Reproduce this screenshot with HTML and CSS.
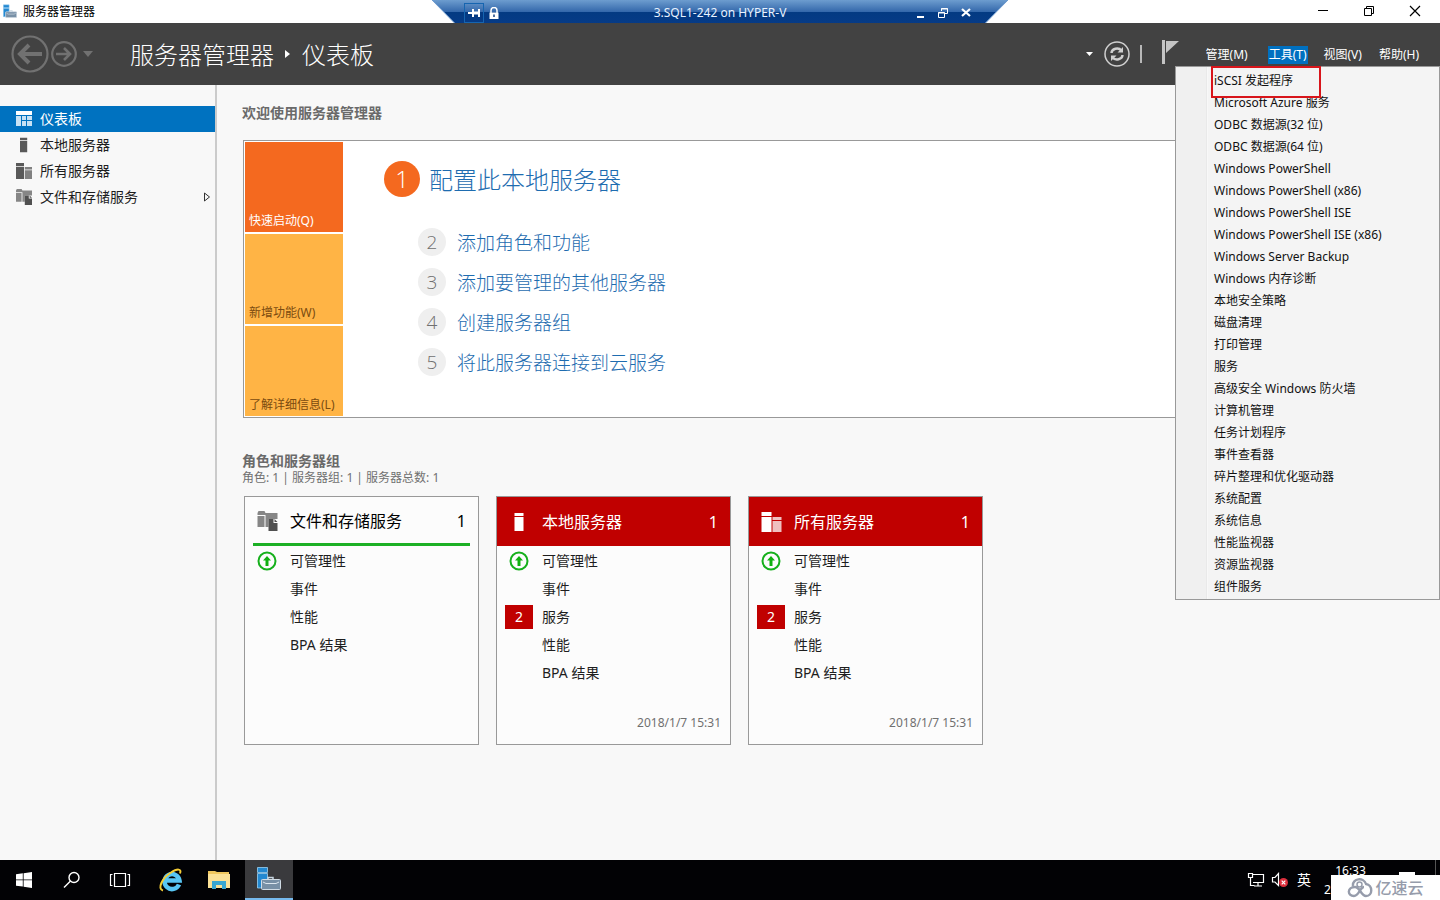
FILE: index.html
```html
<!DOCTYPE html>
<html lang="zh-CN">
<head>
<meta charset="utf-8">
<title>服务器管理器</title>
<link rel="stylesheet" href="styles.css">
</head>
<body>
<svg class="defs" aria-hidden="true">
  <symbol id="i-server" viewBox="0 0 20 20"><path d="M5 1h9v3H5zM5 5h9v14H5z" fill="currentColor"/></symbol>
  <symbol id="i-servers" viewBox="0 0 20 20"><path d="M0 0h10v4H0zM0 5h10v15H0z" fill="currentColor"/><path d="M11 5h9v3h-9zM11 9h9v11h-9z" fill="currentColor" opacity=".75"/></symbol>
  <symbol id="i-files" viewBox="0 0 20 20"><path d="M0 2l1-2h6l1 2h12v6h-9v8H8V4H0zM0 5h7v11H0z" fill="#868686"/><path d="M11 8h5v4h4v8h-9z" fill="#505050"/><path d="M17 8l3 3h-3z" fill="#505050"/></symbol>
  <symbol id="i-up" viewBox="0 0 20 20"><circle cx="10" cy="10" r="8.500" fill="none" stroke="#16b01c" stroke-width="2"/><path d="M10 5l4 4.500h-2.500V15h-3V9.500H6z" fill="#10b010"/></symbol>
  <symbol id="i-manager" viewBox="0 0 24 26"><path d="M.5 1.500h10v5H.5zM.5 7.500h10v6.500H4.500v8h-4z" fill="#2388d0" stroke="#9ad0f4" stroke-width=".8"/><path d="M11 13.500v-2h5v2" fill="none" stroke="#c6d4df" stroke-width="1.500"/><rect x="4.500" y="13.500" width="19" height="10" rx="1" fill="#7890a6" stroke="#d0dbe4"/><path d="M6 16l3 1.500h10l3-1.500" fill="none" stroke="#dce6ee"/></symbol>
</svg>

<div class="titlebar">
  <svg class="app-icon"><use href="#i-manager"/></svg>
  <span class="app-name">服务器管理器</span>
  <div class="window-controls">
    <button aria-label="最小化"><svg viewBox="0 0 12 12"><path d="M1 5.500h10" stroke="#000"/></svg></button>
    <button aria-label="还原"><svg viewBox="0 0 12 12" fill="none" stroke="#000"><path d="M1.500 3.500h7v7h-7zM3.500 3V1.500h7v7H9"/></svg></button>
    <button aria-label="关闭"><svg viewBox="0 0 12 12"><path d="M1 1l10 10M11 1L1 11" stroke="#000" stroke-width="1.200"/></svg></button>
  </div>
</div>

<div class="connection">
  <svg class="connection-shape" viewBox="0 0 576 26" preserveAspectRatio="none">
    <defs><linearGradient id="bar" x2="0" y2="1"><stop offset="0" stop-color="#6d9dcf"/><stop offset=".46" stop-color="#3468ab"/><stop offset=".47" stop-color="#033a82"/><stop offset="1" stop-color="#063b88"/></linearGradient></defs>
    <path d="M0 0h576l-25 25.500H25z" fill="url(#bar)"/><path d="M0 0l25 25.500h526L576 0" fill="none" stroke="#6f9bce"/>
  </svg>
  <div class="connection-content">
    <div class="connection-side">
      <button class="pin" aria-label="固定"><svg viewBox="0 0 12 12"><path d="M0 6h5M5 2v8M11 2v8" stroke="#fff" stroke-width="2"/><path d="M6 6h5" stroke="#fff" stroke-width="3"/></svg></button>
      <button aria-label="连接安全"><svg viewBox="0 0 12 12"><path d="M3 6V3.500a3 3 0 016 0V6" fill="none" stroke="#fff" stroke-width="1.500"/><path d="M1.500 5.500h9V12h-9z" fill="#fff"/><path d="M6 7.500v2.500" stroke="#123f80" stroke-width="1.500"/></svg></button>
    </div>
    <span>3.SQL1-242 on HYPER-V</span>
    <div class="connection-side end">
      <button aria-label="最小化会话"><svg viewBox="0 0 12 12"><path d="M3 10h7" stroke="#fff" stroke-width="2"/></svg></button>
      <button aria-label="还原会话"><svg viewBox="0 0 12 12" fill="none" stroke="#fff"><path d="M1.500 5.500h6v5h-6zM1 6h7M4.500 4V1.500h6v5H8M4 2h7"/></svg></button>
      <button aria-label="关闭会话"><svg viewBox="0 0 12 12"><path d="M2 2l8 7M10 2l-8 7" stroke="#fff" stroke-width="2.200"/></svg></button>
    </div>
  </div>
</div>

<header class="header">
  <div class="history">
    <button aria-label="后退"><svg width="38" height="38" viewBox="0 0 38 38" fill="none" stroke="#717171"><circle cx="19" cy="19" r="17.500" stroke-width="2.200"/><path d="M31 19H9M18 10l-9 9 9 9" stroke-width="4"/></svg></button>
    <button aria-label="前进"><svg width="26" height="26" viewBox="0 0 26 26" fill="none" stroke="#717171"><circle cx="13" cy="13" r="11.800" stroke-width="2.200"/><path d="M5 13h14M13 7l6 6-6 6" stroke-width="2.600"/></svg></button>
    <button aria-label="历史记录"><svg width="12" height="8"><path d="M1 1h10L6 7z" fill="#717171"/></svg></button>
  </div>
  <h1 class="breadcrumb"><span>服务器管理器</span><svg width="6" height="10"><path d="M0 1l5 4-5 4z" fill="#fff"/></svg><span>仪表板</span></h1>
  <div class="header-tools">
    <button aria-label="通知列表"><svg width="8" height="6"><path d="M0 1h7L3.500 5z" fill="#fff"/></svg></button>
    <button aria-label="刷新"><svg width="26" height="26" viewBox="0 0 26 26" fill="none" stroke="#d0d0d0"><circle cx="13" cy="13" r="12" stroke-width="1.500"/><path d="M7.500 12a5.500 4.500 0 0110-2.500M18.500 14a5.500 4.500 0 01-10 2.500" stroke-width="2.400"/><path d="M19 6v5.500h-5.500zM7 20v-5.500h5.500z" fill="#d0d0d0" stroke="none"/></svg></button>
    <i class="divider"></i>
    <button class="flag" aria-label="通知"><svg width="18" height="26"><path d="M0 1h3v24H0zM4 2h13L4 14z" fill="#c4c4c4"/></svg></button>
  </div>
  <nav class="menubar">
    <button>管理(M)</button><button class="open" aria-expanded="true">工具(T)</button><button>视图(V)</button><button>帮助(H)</button>
  </nav>
  <div class="menu" role="menu">
    <button class="marked" role="menuitem">iSCSI 发起程序</button>
    <button role="menuitem">Microsoft Azure 服务</button>
    <button role="menuitem">ODBC 数据源(32 位)</button>
    <button role="menuitem">ODBC 数据源(64 位)</button>
    <button role="menuitem">Windows PowerShell</button>
    <button role="menuitem">Windows PowerShell (x86)</button>
    <button role="menuitem">Windows PowerShell ISE</button>
    <button role="menuitem">Windows PowerShell ISE (x86)</button>
    <button role="menuitem">Windows Server Backup</button>
    <button role="menuitem">Windows 内存诊断</button>
    <button role="menuitem">本地安全策略</button>
    <button role="menuitem">磁盘清理</button>
    <button role="menuitem">打印管理</button>
    <button role="menuitem">服务</button>
    <button role="menuitem">高级安全 Windows 防火墙</button>
    <button role="menuitem">计算机管理</button>
    <button role="menuitem">任务计划程序</button>
    <button role="menuitem">事件查看器</button>
    <button role="menuitem">碎片整理和优化驱动器</button>
    <button role="menuitem">系统配置</button>
    <button role="menuitem">系统信息</button>
    <button role="menuitem">性能监视器</button>
    <button role="menuitem">资源监视器</button>
    <button role="menuitem">组件服务</button>
  </div>
</header>

<div class="workspace">
  <nav class="sidebar">
    <a href="#dashboard" class="active"><svg viewBox="0 0 16 16"><path d="M0 0h16v4H0z" fill="#fff"/><path d="M0 5h5v10H0zM6 5h4v4H6zM11 5h5v4h-5zM6 10h4v5H6zM11 10h5v5h-5z" fill="#c8e2f4"/></svg>仪表板</a>
    <a href="#local"><svg><use href="#i-server"/></svg>本地服务器</a>
    <a href="#all"><svg><use href="#i-servers"/></svg>所有服务器</a>
    <a href="#files"><svg><use href="#i-files"/></svg>文件和存储服务<svg class="expand" viewBox="0 0 8 10"><path d="M1.500 1l5 4-5 4z" fill="none" stroke="#333"/></svg></a>
  </nav>
  <main class="main">
    <h2 class="section-title">欢迎使用服务器管理器</h2>
    <section class="welcome">
      <div class="tabs">
        <button class="current">快速启动(Q)</button>
        <button>新增功能(W)</button>
        <button>了解详细信息(L)</button>
      </div>
      <div class="steps">
        <a class="primary" href="#s1"><b>1</b>配置此本地服务器</a>
        <a href="#s2"><b>2</b>添加角色和功能</a>
        <a href="#s3"><b>3</b>添加要管理的其他服务器</a>
        <a href="#s4"><b>4</b>创建服务器组</a>
        <a href="#s5"><b>5</b>将此服务器连接到云服务</a>
      </div>
    </section>
    <h2 class="section-title groups">角色和服务器组</h2>
    <p class="summary">角色: 1 | 服务器组: 1 | 服务器总数: 1</p>
    <div class="cards">
      <article class="card ok">
        <h3><svg><use href="#i-files"/></svg><span>文件和存储服务</span><span>1</span></h3>
        <ul>
          <li><span class="state"><svg><use href="#i-up"/></svg></span>可管理性</li>
          <li><span class="state"></span>事件</li>
          <li><span class="state"></span>性能</li>
          <li><span class="state"></span>BPA 结果</li>
        </ul>
      </article>
      <article class="card alert">
        <h3><svg><use href="#i-server"/></svg><span>本地服务器</span><span>1</span></h3>
        <ul>
          <li><span class="state"><svg><use href="#i-up"/></svg></span>可管理性</li>
          <li><span class="state"></span>事件</li>
          <li><span class="state count">2</span>服务</li>
          <li><span class="state"></span>性能</li>
          <li><span class="state"></span>BPA 结果</li>
        </ul>
        <time>2018/1/7 15:31</time>
      </article>
      <article class="card alert">
        <h3><svg><use href="#i-servers"/></svg><span>所有服务器</span><span>1</span></h3>
        <ul>
          <li><span class="state"><svg><use href="#i-up"/></svg></span>可管理性</li>
          <li><span class="state"></span>事件</li>
          <li><span class="state count">2</span>服务</li>
          <li><span class="state"></span>性能</li>
          <li><span class="state"></span>BPA 结果</li>
        </ul>
        <time>2018/1/7 15:31</time>
      </article>
    </div>
  </main>
</div>

<footer class="taskbar">
  <div class="apps">
    <button aria-label="开始"><svg width="16" height="16" viewBox="0 0 16 16"><path d="M0 2.300L6.800 1.300v6.200H0zM7.600 1.200L16 0v7.500H7.600zM0 8.300h6.800v6.300L0 13.700zM7.600 8.300H16V16l-8.400-1.300z" fill="#fff"/></svg></button>
    <button aria-label="搜索"><svg width="18" height="18" viewBox="0 0 18 18" fill="none" stroke="#fff" stroke-width="1.400"><circle cx="11" cy="6.500" r="5"/><path d="M7.500 10L1 16.500"/></svg></button>
    <button aria-label="任务视图"><svg width="22" height="16" viewBox="0 0 22 16" fill="none" stroke="#fff" stroke-width="1.200"><path d="M5.500 1.500h11v13h-11zM3.500 2.500h-2v11h2M18.500 2.500h2v11h-2"/></svg></button>
    <button class="wide" aria-label="Internet Explorer"><svg width="24" height="24" viewBox="0 0 24 24" fill="none"><path d="M20 16.500a7.500 7.500 0 1 1 .5-4H7" stroke="#58c6f4" stroke-width="4.500"/><path d="M4 22.500C-2 21 3 10 12 4.500c6-4 11-4 9 1" stroke="#f4cc35" stroke-width="2"/></svg></button>
    <button aria-label="文件资源管理器"><svg width="22" height="20" viewBox="0 0 22 20"><path d="M0 1h7l2 1h12v4H0z" fill="#f0c75e"/><path d="M0 4h22v14H0z" fill="#fbe197"/><path d="M4 11h14v8h-4v-4H8v4H4z" fill="#3aa7d2"/></svg></button>
    <button class="running" aria-label="服务器管理器"><svg width="24" height="26"><use href="#i-manager"/></svg></button>
  </div>
  <div class="tray">
    <svg width="18" height="16" viewBox="0 0 18 16" fill="none" stroke="#fff" stroke-width="1.200"><path d="M6 2.500h10.500v8H6M11 11v3M7 14h8M1.500 1.500h4v4h-4zM3.500 6v7.500h4"/></svg>
    <svg width="18" height="16" viewBox="0 0 18 16"><path d="M1.500 5.500H4l3.500-4v12L4 10H1.500z" fill="none" stroke="#fff" stroke-width="1.200"/><circle cx="12.500" cy="10.500" r="4.500" fill="#dc2f3d"/><path d="M10.700 8.700l3.600 3.600m0-3.600l-3.600 3.600" stroke="#fff" stroke-width="1.200"/></svg>
    <span class="ime">英</span>
    <div class="clock"><span>16:33</span><span class="date">2</span></div>
    <svg width="16" height="16"><path d="M0 0h16v12H0z" fill="#fff"/></svg>
    <i class="show-desktop"></i>
  </div>
  <div class="watermark"><svg width="26" height="20" viewBox="0 0 26 20" fill="none" stroke="#969cab" stroke-width="2.400"><path d="M6 8C5 0 17-1 19 6c7 1 7 12 0 12-5 0-6-9-11-9-8 0-8 9-1 9 5 0 6-9 10-9"/><circle cx="12.500" cy="6.500" r="2.500" stroke-width="1.500"/></svg><span>亿速云</span></div>
</footer>
</body>
</html>
```
FILE: styles.css
```css
*, *::after { box-sizing: border-box; }
body {
  margin: 0;
  height: 100vh;
  display: flex;
  flex-direction: column;
  position: relative;
  overflow: hidden;
  background: #f8f8f8;
  color: #1e1e1e;
  font: 12px/16px "Noto Sans", "Noto Sans CJK SC", sans-serif;
}
button { border: 0; padding: 0; background: none; color: inherit; font: inherit; }
a { color: inherit; text-decoration: none; }
h1, h2, h3, p, ul { margin: 0; padding: 0; font-weight: 400; }
ul { list-style: none; }
svg { display: block; flex: none; }
.defs { position: absolute; width: 0; height: 0; }

.titlebar { display: flex; align-items: center; height: 23px; padding-left: 3px; background: #fff; color: #000; }
.app-icon { width: 14px; height: 15px; margin-right: 6px; }
.window-controls { display: flex; margin-left: auto; height: 100%; padding-right: 2px; }
.window-controls button { display: grid; place-items: center; width: 46px; height: 21px; }
.window-controls svg { width: 12px; height: 12px; }

.connection { position: absolute; top: 0; left: 50%; width: 576px; height: 26px; margin-left: -288px; color: #e8f2ff; }
.connection-shape { position: absolute; width: 100%; height: 100%; }
.connection-content { position: relative; display: flex; align-items: center; justify-content: space-between; height: 25px; padding: 0 32px; }
.connection-side { display: flex; width: 100px; }
.connection-side.end { width: 66px; margin-left: 34px; justify-content: space-between; }
.connection-side button { display: grid; place-items: center; width: 20px; height: 20px; }
.connection-side svg { width: 12px; height: 12px; }
.connection-side .pin { border: 1px solid #1665b0; }

.header { position: relative; display: flex; align-items: center; flex: none; height: 62px; padding: 0 20px 0 11px; background: #424242; color: #fff; }
.history { display: flex; align-items: center; gap: 2px; width: 119px; }
.history button:last-child { margin-left: 3px; }
.breadcrumb { display: flex; align-items: center; gap: 11px; font: 300 24px/32px "Noto Sans CJK SC", sans-serif; }
.header-tools { display: flex; align-items: center; gap: 10px; margin-left: auto; margin-right: 25px; }
.divider { width: 2px; height: 18px; margin-right: 10px; background: #b8b8b8; }
.flag { padding-bottom: 4px; }
.menubar { display: flex; gap: 15px; padding-top: 2px; line-height: 18px; }
.menubar button { padding: 0 1px; }
.menubar .open { margin: 0 0 0 4px; background: #0070c0; }

.menu { position: absolute; z-index: 2; top: 43px; right: 0; width: 265px; padding: 3px 1px 1px 32px; border: 1px solid #999; background: linear-gradient(90deg, #f0f0f0 30px, #e2e2e2 30px, #fff 32px, #f4f4f4 32px); color: #111; }
.menu button { display: block; width: 100%; height: 22px; padding-left: 6px; text-align: left; line-height: 22px; }
.menu .marked { position: relative; }
.menu .marked::after { content: ""; position: absolute; top: -4px; left: 3px; width: 110px; height: 32px; border: 2px solid #d8151b; }

.workspace { display: flex; flex: 1; min-height: 0; }
.sidebar { width: 217px; flex: none; padding-top: 21px; border-right: 2px solid #cbcbcb; font-size: 14px; }
.sidebar a { display: flex; align-items: center; gap: 8px; height: 26px; padding: 0 4px 0 16px; }
.sidebar svg { width: 16px; height: 16px; color: #595959; }
.sidebar .active { background: #0072c0; color: #fff; }
.sidebar .expand { width: 8px; height: 10px; margin-left: auto; }

.main { flex: 1; min-width: 0; padding: 18px 14px 0 25px; }
.section-title { font-size: 14px; line-height: 20px; font-weight: 600; color: #6a6a6a; }
.welcome { display: flex; margin: 17px 0 0 1px; padding: 1px; min-height: 278px; border: 1px solid #999; background: #fff; }
.tabs { display: grid; gap: 2px; width: 98px; grid-auto-rows: 1fr; }
.tabs button { display: flex; align-items: flex-end; padding: 3px 4px; background: #ffb445; color: #7a4b10; white-space: nowrap; }
.tabs .current { background: #f4691f; color: #fff; }
.steps { padding: 14px 0 0 41px; font: 300 19px/28px "Noto Sans CJK SC", sans-serif; color: #1e6cb0; }
.steps a { display: flex; align-items: center; gap: 11px; height: 28px; margin: 0 0 12px 34px; }
.steps b { display: grid; place-items: center; width: 28px; height: 28px; border-radius: 50%; background: #efefef; color: #707070; font-family: "Open Sans", sans-serif; font-weight: 300; }
.steps .primary { gap: 9px; height: 46px; margin: 0 0 26px; font-size: 24px; }
.steps .primary b { width: 36px; height: 36px; background: #f4691f; color: #fff; }
.groups { margin-top: 33px; }
.summary { color: #707070; line-height: 13px; }
.cards { display: flex; gap: 17px; margin-top: 12px; padding-left: 2px; }
.card { display: flex; flex-direction: column; width: 235px; min-height: 249px; border: 1px solid #999; background: #fcfcfc; font-size: 14px; }
.card h3 { display: flex; align-items: center; height: 49px; padding: 0 12px; font-size: 16px; color: #000; }
.card h3 svg { width: 21px; height: 20px; margin-right: 12px; }
.card h3 span:last-child { margin-left: auto; }
.card.ok h3 { margin: 0 8px; padding: 2px 4px 0; border-bottom: 3px solid #1cb025; }
.card.alert h3 { background: #c00000; color: #fff; }
.card ul { padding-top: 1px; }
.card li { display: flex; align-items: center; gap: 9px; height: 28px; padding-left: 8px; }
.state { display: grid; place-items: center; width: 28px; height: 24px; }
.state svg { width: 20px; height: 20px; }
.count { background: #c00000; color: #fff; }
.card time { margin: auto 9px 13px; text-align: right; font-size: 12px; color: #707070; }

.taskbar { position: relative; display: flex; justify-content: space-between; flex: none; height: 40px; background: #020205; color: #fff; }
.apps, .tray { display: flex; align-items: center; }
.apps button { display: grid; place-items: center; width: 48px; height: 40px; }
.apps .wide { margin-left: 3px; }
.apps .running { margin-left: 2px; background: #3a3a3d; border-bottom: 2px solid #76b9ed; }
.tray { gap: 6px; }
.ime { font-size: 14px; margin-left: 2px; }
.clock { display: flex; flex-direction: column; align-items: center; width: 76px; padding: 0 16px 0 7px; line-height: 19px; }
.clock .date { align-self: flex-start; }
.show-desktop { width: 5px; height: 40px; margin-left: 14px; border-left: 1px solid #555; }
.watermark { position: absolute; right: 0; bottom: 0; display: flex; align-items: center; justify-content: center; gap: 2px; width: 109px; height: 25px; background: #fff; color: #969cab; font-size: 16px; font-weight: 500; }
```
